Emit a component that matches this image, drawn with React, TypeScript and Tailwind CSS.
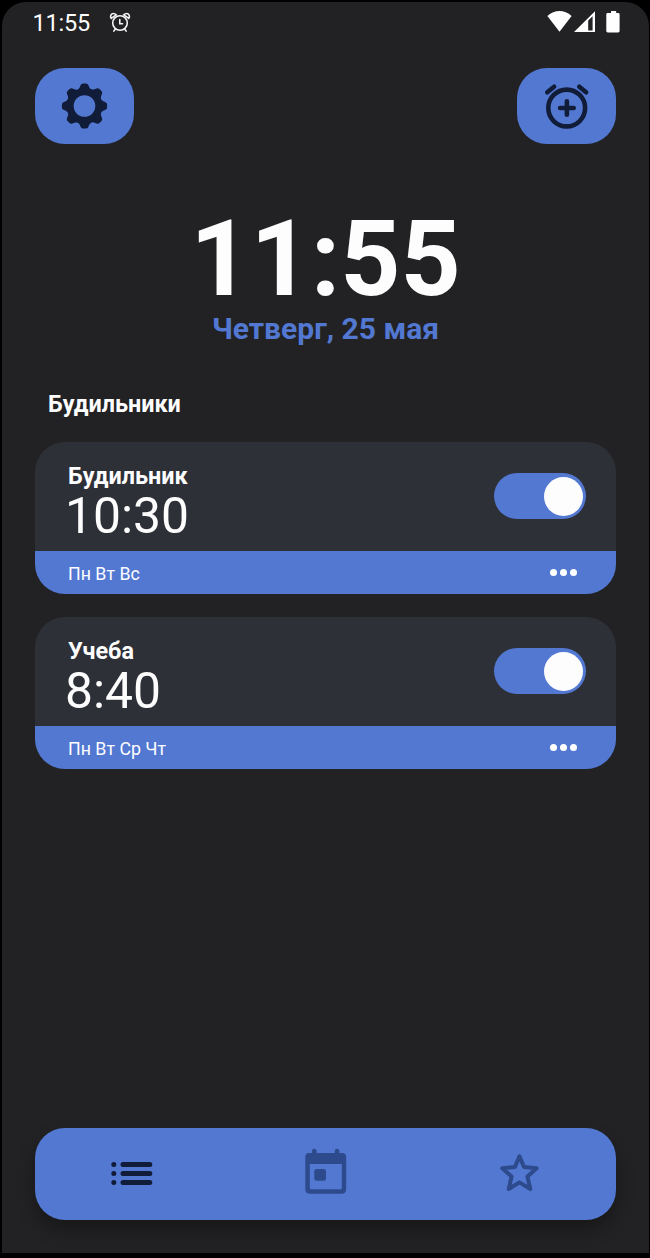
import React from "react";

type Alarm = { name: string; time: string; days: string };

const alarms: Alarm[] = [
  { name: "Будильник", time: "10:30", days: "Пн Вт Вс" },
  { name: "Учеба", time: "8:40", days: "Пн Вт Ср Чт" },
];

// Outline of an eight-toothed gear centred on the origin.
const gearPath = (() => {
  const point = (x: number, y: number, a: number) => {
    const c = Math.cos(a);
    const s = Math.sin(a);
    return `${(x * c - y * s).toFixed(2)} ${(x * s + y * c).toFixed(2)}`;
  };
  let d = "";
  for (let i = 0; i < 8; i++) {
    const a = (i * Math.PI) / 4;
    d += `${i === 0 ? "M" : "L"}${point(-5, -18.2, a)}`;
    d += `L${point(-3.8, -21, a)}Q${point(-3.1, -22.6, a)} ${point(-1.4, -22.6, a)}`;
    d += `L${point(1.4, -22.6, a)}Q${point(3.1, -22.6, a)} ${point(3.8, -21, a)}`;
    d += `L${point(5, -18.2, a)}Q${point(6.2, -15.9, a)} ${point(9.05, -16.5, a)}`;
  }
  return d + "Z M0 -10.8A10.8 10.8 0 1 0 0 10.8A10.8 10.8 0 1 0 0 -10.8Z";
})();

function StatusBar() {
  return (
    <div className="flex h-[42px] items-center justify-between pl-[30.5px] pr-[28px]">
      <div className="flex items-center">
        <span className="w-[59px] text-[23.5px] leading-[42px] tracking-[-0.2px]">11:55</span>
        <svg className="-mt-[2px] ml-[17px]" width="22" height="22" viewBox="0 0 22 22" fill="none" stroke="#f4f4f4" strokeWidth="1.6" strokeLinecap="round">
          <circle cx="11" cy="12" r="7.3" />
          <path d="M10.8 8.6v4.1h2.7" />
          <path d="M2.2 7.4C.8 5.3 2 2.5 4.5 2.5c1.4 0 2.1.6 2.7 1.3L2.2 7.4z" />
          <path d="M19.8 7.4C21.2 5.3 20 2.5 17.5 2.5c-1.4 0-2.1.6-2.7 1.3l5 3.6z" />
          <path d="M6.2 18.2l-1.4 1.9M15.8 18.2l1.4 1.9" />
        </svg>
      </div>
      <svg className="-mt-[2px]" width="74" height="24" viewBox="0 0 74 24" fill="#fff">
        <path d="M.4 6C7.5-.6 17.5-.6 24.6 6L12.5 21.8z" />
        <path fillRule="evenodd" d="M27 22L48 1.2V22zM41.2 10.6V20.4H45.6V6.2z" />
        <path d="M60.7 3h3.3V1.6q0-.6.6-.6h4q.6 0 .6.6V3h2q1.4 0 1.4 1.4v16.7q0 1.4-1.4 1.4h-10.5q-1.4 0-1.4-1.4V4.4q0-1.4 1.4-1.4z" />
      </svg>
    </div>
  );
}

function AlarmCard({ alarm }: { alarm: Alarm }) {
  return (
    <article className="h-[152px] overflow-hidden rounded-[30px] bg-[#2d3037]">
      <div className="flex h-[109px] justify-between pl-[33px] pr-[30px]">
        <div className="pt-[20px]">
          <h3 className="text-[23.4px] font-bold leading-[28px]">{alarm.name}</h3>
          <p className="-ml-[3px] text-[49.8px] leading-[52px]">{alarm.time}</p>
        </div>
        <button aria-label={alarm.name} className="mt-[31px] flex h-[46px] w-[92px] items-center justify-end rounded-full bg-[#5278d2] pr-[3.5px]">
          <span className="h-[39px] w-[39px] rounded-full bg-[#fdfdfe]" />
        </button>
      </div>
      <div className="flex h-[43px] items-center justify-between bg-[#5278d2] pl-[33px] pr-[39px]">
        <span className="pt-[1px] text-[17.8px] leading-[43px]">{alarm.days}</span>
        <span className="flex gap-[3px]">
          <i className="h-[7px] w-[7px] rounded-full bg-white" />
          <i className="h-[7px] w-[7px] rounded-full bg-white" />
          <i className="h-[7px] w-[7px] rounded-full bg-white" />
        </span>
      </div>
    </article>
  );
}

function BottomNav() {
  return (
    <nav className="mx-[33px] mb-[33px] mt-auto flex h-[92px] items-center rounded-[30px] bg-[#5278d2] shadow-[0_10px_18px_rgba(0,0,0,0.3)]">
      <button className="flex flex-1 justify-center">
        <svg width="44" height="48" viewBox="0 0 44 48" fill="none" stroke="#111c38" strokeWidth="5" strokeLinecap="round">
          <path d="M3.8 14.4h.01M3.8 23.4h.01M3.8 32.5h.01M13 14.4h26.8M13 23.4h26.8M13 32.5h26.8" />
        </svg>
      </button>
      <button className="flex flex-1 justify-center">
        <svg className="-mt-[5px]" width="44" height="48" viewBox="0 0 44 48" fill="#2d4a8d">
          <path fillRule="evenodd" d="M5 5h3V3q0-2.2 2.3-2.2T12.6 3v2h18.2V3q0-2.2 2.3-2.2T35.4 3v2h2.4q4.4 0 4.4 4.4v31.9q0 4.4-4.4 4.4H5.7q-4.4 0-4.4-4.400V9.400Q1.300 5 5 5zM5.800 16v23.700q0 1.600 1.600 1.600h28.800q1.600 0 1.600-1.600V16z" />
          <rect x="10.3" y="21" width="11.7" height="11.7" rx="2.5" />
        </svg>
      </button>
      <button className="flex flex-1 justify-center">
        <svg className="-mt-[5px]" width="44" height="48" viewBox="0 0 44 48" fill="none" stroke="#2d4a8d" strokeWidth="4" strokeLinejoin="round">
          <path d="M22.5 8.3l4.5 10.8 12.7 1.2-9.3 8.2 2.900 12.500-10.800-6.600-10.800 6.600 2.900-12.500-9.400-8.200 12.700-1.200z" />
        </svg>
      </button>
    </nav>
  );
}

export default function App() {
  return (
    <div className="h-[1258px] w-[650px] bg-black pb-[5px] pl-[2px] pr-[1px] pt-[2px]">
      <main className="flex h-full flex-col overflow-hidden rounded-t-[24px] bg-[#222224] font-['Roboto',sans-serif] text-[#fdfdfe]">
        <StatusBar />
        <header className="mt-[24px] flex justify-between px-[33px]">
          <button className="flex h-[76px] w-[99px] items-center justify-center rounded-[30px] bg-[#5278d2]">
            <svg width="50" height="50" viewBox="-24.5 -25 50 50" fill="#111c38" fillRule="evenodd">
              <path d={gearPath} />
            </svg>
          </button>
          <button className="flex h-[76px] w-[99px] items-center justify-center rounded-[30px] bg-[#5278d2]">
            <svg width="50" height="50" viewBox="0.3 0 50 50" fill="none" stroke="#111c38" strokeWidth="4.6" strokeLinecap="round">
              <circle cx="25" cy="27" r="18.4" />
              <path d="M18.4 27h13.6M25.2 20.2v13.6M5.6 11.2l6.800-5.400M37.600 5.800l6.800 5.400" />
            </svg>
          </button>
        </header>
        <section className="mt-[60px] flex flex-col items-center">
          <time className="text-[105px] font-bold leading-[112px]">11:55</time>
          <p className="text-[30px] font-bold leading-[26px] text-[#5278d2]">Четверг, 25 мая</p>
        </section>
        <h2 className="ml-[46px] mt-[47px] text-[23.4px] font-bold leading-[30px]">Будильники</h2>
        <section className="mx-[33px] mt-[23px] flex flex-col gap-[23px]">
          {alarms.map((alarm) => (
            <AlarmCard key={alarm.name} alarm={alarm} />
          ))}
        </section>
        <BottomNav />
      </main>
    </div>
  );
}
